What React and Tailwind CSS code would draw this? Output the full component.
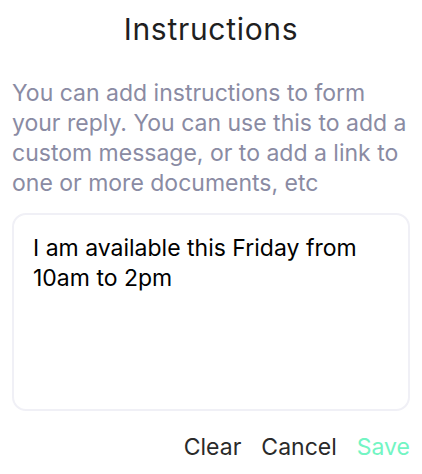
export default function App() {
  return (
    <div className="w-[422px] h-[474px] bg-white px-3 font-['Inter',sans-serif] overflow-hidden">
      <h1 className="pt-[9px] text-center text-[30px] leading-[40px] tracking-[0.7px] text-[#1f1f1f]">Instructions</h1>
      <p className="mt-[29px] text-[23px] leading-[30px] text-[#8a8ba3]">
        You can add instructions to form your reply. You can use this to add a custom message, or to add a link to one or more documents, etc
      </p>
      <div className="mt-[15px] h-[198px] rounded-[14px] border-2 border-[#f0f0f6] pl-[19px] pr-4 pt-[18px] text-[23px] leading-[30px] text-black">
        I am available this Friday from 10am to 2pm
      </div>
      <div className="mt-[21px] flex justify-end gap-5 text-[23px] leading-[30px]">
        <button className="text-[#2a2a2a]">Clear</button>
        <button className="text-[#2a2a2a]">Cancel</button>
        <button className="text-[#73f5c3]">Save</button>
      </div>
    </div>
  );
}
